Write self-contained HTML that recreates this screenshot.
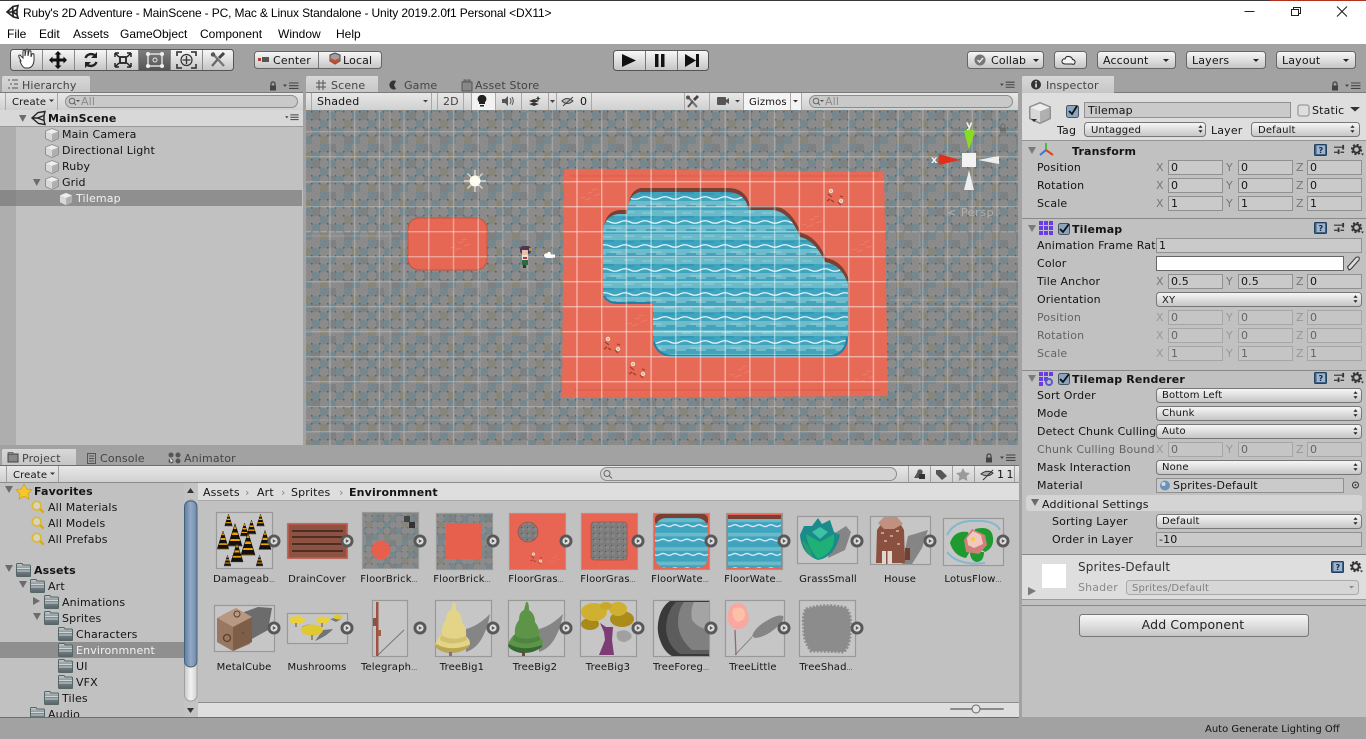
<!DOCTYPE html>
<html><head><meta charset="utf-8"><title>Unity</title>
<style>
html,body{margin:0;padding:0;background:#a2a2a2;overflow:hidden}
svg{display:block;position:absolute;left:0;top:0}
text{font-family:"DejaVu Sans","Liberation Sans",sans-serif;font-size:11px;letter-spacing:.15px;fill:#141414;white-space:pre}
.w{font-family:"Liberation Sans",sans-serif;font-size:12px;letter-spacing:0;fill:#000}
.b{font-weight:bold}
.g{fill:#777}
.tb{fill:#444}
.c{text-anchor:middle}
.s{font-size:10px}
.f{fill:#cacaca;stroke:#909090}
.d{fill:url(#btn);stroke:#777}
.el{font-size:6px;letter-spacing:0}
</style></head>
<body>
<svg width="1366" height="739" viewBox="0 0 1366 739" xmlns="http://www.w3.org/2000/svg">
<defs>
<linearGradient id="btn" x1="0" y1="0" x2="0" y2="1"><stop offset="0" stop-color="#f8f8f8"/><stop offset="1" stop-color="#c4c4c4"/></linearGradient>
<linearGradient id="bar" x1="0" y1="0" x2="0" y2="1"><stop offset="0" stop-color="#e8e8e8"/><stop offset="1" stop-color="#d0d0d0"/></linearGradient>
<linearGradient id="act" x1="0" y1="0" x2="0" y2="1"><stop offset="0" stop-color="#7d7d7d"/><stop offset="1" stop-color="#555"/></linearGradient>
<linearGradient id="tab" x1="0" y1="0" x2="0" y2="1"><stop offset="0" stop-color="#d8d8d8"/><stop offset="1" stop-color="#c6c6c6"/></linearGradient>
<linearGradient id="sb" x1="0" y1="0" x2="1" y2="0"><stop offset="0" stop-color="#5f7da0"/><stop offset=".5" stop-color="#94aac4"/><stop offset="1" stop-color="#6b88a8"/></linearGradient>
<linearGradient id="sbt" x1="0" y1="0" x2="1" y2="0"><stop offset="0" stop-color="#c8c8c8"/><stop offset=".5" stop-color="#f2f2f2"/><stop offset="1" stop-color="#d0d0d0"/></linearGradient>
<linearGradient id="fo" x1="0" y1="0" x2="0" y2="1"><stop offset="0" stop-color="#c8cfd2"/><stop offset=".45" stop-color="#7f8b90"/><stop offset="1" stop-color="#55626a"/></linearGradient>

<pattern id="tiles" patternUnits="userSpaceOnUse" width="48" height="48">
<rect width="48" height="48" fill="#8b8b8b"/>
<g fill="#76878d">
<rect x="8" y="0" width="8" height="8"/><rect x="32" y="0" width="8" height="8"/>
<rect x="0" y="8" width="8" height="8"/><rect x="24" y="8" width="8" height="8"/>
<rect x="16" y="16" width="8" height="8"/><rect x="40" y="16" width="8" height="8"/>
<rect x="32" y="24" width="8" height="8"/>
<rect x="0" y="32" width="8" height="8"/><rect x="24" y="32" width="8" height="8"/>
<rect x="16" y="40" width="8" height="8"/>
</g>
<g fill="#88857a"><rect x="16" y="8" width="8" height="8"/><rect x="8" y="24" width="8" height="8"/><rect x="32" y="40" width="8" height="8"/></g>
<g fill="#7e8182"><rect x="24" y="16" width="8" height="8"/><rect x="8" y="40" width="8" height="8"/><rect x="40" y="32" width="8" height="8"/><rect x="40" y="0" width="8" height="8"/></g>
<g fill="#5c5c5c">
<rect x="7" y="7" width="1.500" height="1.500"/><rect x="15" y="7" width="1.500" height="1.500"/><rect x="23" y="7" width="1.500" height="1.500"/><rect x="31" y="7" width="1.500" height="1.500"/><rect x="39" y="7" width="1.500" height="1.500"/><rect x="47" y="7" width="1" height="1.500"/>
<rect x="7" y="15" width="1.500" height="1.500"/><rect x="15" y="15" width="1.500" height="1.500"/><rect x="23" y="15" width="1.500" height="1.500"/><rect x="31" y="15" width="1.500" height="1.500"/><rect x="39" y="15" width="1.500" height="1.500"/><rect x="47" y="15" width="1" height="1.500"/>
<rect x="7" y="23" width="1.500" height="1.500"/><rect x="15" y="23" width="1.500" height="1.500"/><rect x="23" y="23" width="1.500" height="1.500"/><rect x="31" y="23" width="1.500" height="1.500"/><rect x="39" y="23" width="1.500" height="1.500"/><rect x="47" y="23" width="1" height="1.500"/>
<rect x="7" y="31" width="1.500" height="1.500"/><rect x="15" y="31" width="1.500" height="1.500"/><rect x="23" y="31" width="1.500" height="1.500"/><rect x="31" y="31" width="1.500" height="1.500"/><rect x="39" y="31" width="1.500" height="1.500"/><rect x="47" y="31" width="1" height="1.500"/>
<rect x="7" y="39" width="1.500" height="1.500"/><rect x="15" y="39" width="1.500" height="1.500"/><rect x="23" y="39" width="1.500" height="1.500"/><rect x="31" y="39" width="1.500" height="1.500"/><rect x="39" y="39" width="1.500" height="1.500"/><rect x="47" y="39" width="1" height="1.500"/>
</g>
</pattern>
<pattern id="tilesS" patternUnits="userSpaceOnUse" width="48" height="48" patternTransform="scale(.75)"><rect width="48" height="48" fill="url(#tiles)"/></pattern>
<pattern id="grayT" patternUnits="userSpaceOnUse" width="6" height="6"><rect width="6" height="6" fill="#7c7c7c"/><rect x="0" y="0" width="3" height="3" fill="#868686"/><rect x="5" y="5" width="1" height="1" fill="#555"/></pattern>
<pattern id="grid" patternUnits="userSpaceOnUse" x="601" y="181" width="24.7" height="25">
<rect width="24.7" height="1.400" fill="#fff" fill-opacity=".38"/><rect width="1.400" height="25" fill="#fff" fill-opacity=".38"/>
</pattern>
<pattern id="water" patternUnits="userSpaceOnUse" x="0" y="210" width="40" height="24">
<rect width="40" height="24" fill="#3fa5bf"/>
<rect y="0" width="40" height="6" fill="#6abaca"/><rect y="15" width="40" height="6" fill="#6ebccb"/>
<path d="M0 7h14M22 8h12M6 20h10M26 20h10" stroke="#2a94b5" stroke-width="1.300"/>
<path d="M2 3h10M24 2h10M10 18h12" stroke="#94cfd9" stroke-width="1"/>
<path d="M0 12q5-2.500 10 0t10 0t10 0t10 0" stroke="#e2f5f8" stroke-width="1.300" fill="none"/>
</pattern>
<pattern id="waterS" patternUnits="userSpaceOnUse" width="40" height="24" patternTransform="scale(.6)">
<rect width="40" height="24" fill="#3fa5bf"/><rect width="40" height="6" fill="#6abaca"/><path d="M0 12q5-3 10 0t10 0t10 0t10 0" stroke="#eef" stroke-width="2" fill="none"/></pattern>

<symbol id="cube" viewBox="0 0 14 14" overflow="visible">
<path d="M7 0.500L13.500 3.200V10.500L7 13.500L.5 10.500V3.200Z" fill="#cfcfcf" stroke="#909090"/>
<path d="M7 1L13 3.400L7 6L1 3.400Z" fill="#eee"/><path d="M7 6V13L13 10.200V3.600Z" fill="#b0b0b0"/><path d="M7 6V13L1 10.200V3.600Z" fill="#d8d8d8"/>
</symbol>
<symbol id="folder" viewBox="0 0 15 14" overflow="visible">
<path d="M.5 3.500V1.500Q.5.5 1.500.5H6L7 2H13.500Q14.500 2 14.500 3V13Q14.500 13.500 13.500 13.500H1.500Q.5 13.500.5 12.500Z" fill="url(#fo)" stroke="#566"/>
<path d="M1 5.500H14M1 8H14" stroke="#e6e9ea" stroke-width=".8"/>
</symbol>
<symbol id="lens" viewBox="0 0 16 16" overflow="visible">
<circle cx="6.500" cy="6.500" r="5" fill="#e8e8c8" fill-opacity=".5" stroke="#e0b820" stroke-width="1.800"/><path d="M10.500 10.500L14.500 14.500" stroke="#d8a818" stroke-width="2.600"/>
</symbol>
<symbol id="play" viewBox="0 0 14 14"><circle cx="7" cy="7" r="6.500" fill="#585858"/><circle cx="7" cy="7" r="3.600" fill="#ddd"/><path d="M5.800 5V9L9 7Z" fill="#585858"/></symbol>
<symbol id="book" viewBox="0 0 13 12"><rect x=".5" y=".5" width="12" height="11" rx="1" fill="#3f6288" stroke="#24405e"/><rect x="2.500" y="1.500" width="8.500" height="8.500" fill="#9cb6ce"/><text x="4.500" y="9" style="font-size:8px;fill:#224;font-weight:bold;letter-spacing:0">?</text></symbol>
<symbol id="slid" viewBox="0 0 12 12"><path d="M0 3.500H9M0 9H4M7 9H11" stroke="#333" stroke-width="1.300"/><rect x="9" y="1" width="2" height="5" fill="#333"/><rect x="4" y="6" width="2" height="5" fill="#333"/></symbol>
<symbol id="gear" viewBox="0 0 13 12"><circle cx="5.500" cy="5.500" r="3.300" fill="none" stroke="#333" stroke-width="2"/><circle cx="5.500" cy="5.500" r="4.800" fill="none" stroke="#333" stroke-width="1.800" stroke-dasharray="2 1.770"/><path d="M10 9.500H13L11.500 11.500Z" fill="#333"/></symbol>
<symbol id="ud" viewBox="0 0 6 9"><path d="M3 0L5.500 3H.5ZM3 9L5.500 6H.5Z" fill="#222"/></symbol>
<symbol id="menu" viewBox="0 0 17 8"><path d="M0 2.500L4 2.500L2 5Z" fill="#444"/><path d="M6 1H15.500M6 3.700H15.500M6 6.400H15.500" stroke="#444" stroke-width="1.100"/></symbol>
<symbol id="lock" viewBox="0 0 8 10"><path d="M2 4.500V3Q2 1 4 1T6 3V4.500" fill="none" stroke="#444" stroke-width="1.200"/><rect x="1" y="4.500" width="6" height="5" fill="#444"/></symbol>
<symbol id="flow" viewBox="0 0 20 20" overflow="visible">
<path d="M2 6l4 3M5 12l3 2M12 14l3 3M1 13l3-2M14 8l3 1" stroke="#a84030" stroke-width="1.400"/><circle cx="5" cy="3" r="2.200" fill="#e4e0d8"/><circle cx="15" cy="13" r="2.200" fill="#e4e0d8"/><circle cx="5" cy="3" r=".9" fill="#e0a030"/><circle cx="15" cy="13" r=".9" fill="#e0a030"/>
</symbol>
<symbol id="gr" viewBox="0 0 24 14" overflow="visible"><path d="M2 10l5-1M7 12l6-2M10 5l5-1M16 8l6-2M14 2l5-1" stroke="#f08a78" stroke-width="1" opacity=".55"/></symbol>
<symbol id="cone" viewBox="0 0 14 22" overflow="visible">
<path d="M7 0L14 22H0Z" fill="#f0a000" stroke="#111" stroke-width=".6"/><path d="M5 5H9L10 8.500H4ZM3.200 11H10.800L11.800 15H2ZM1.200 17H12.800L13.800 21.500H.4Z" fill="#111"/>
</symbol>
</defs>

<!-- base -->
<rect width="1366" height="739" fill="#a2a2a2"/>
<rect width="1366" height="44" fill="#fff"/>
<rect width="1366" height="1" fill="#3a3a3a"/>
<rect x="1270" width="96" height="1" fill="#b03020"/>
<g fill="none" stroke="#222" stroke-width="1.600"><path d="M7 12L13 6.500L18 5.500L17 9.500V14.500L18 18L13.500 17L7 12Z"/><path d="M7 12H12.500L17 9.500M12.500 12L17 14.500M13 7L12.500 12L13.500 17"/></g>
<text class="w" x="23" y="17" style="letter-spacing:-.147px">Ruby's 2D Adventure - MainScene - PC, Mac &amp; Linux Standalone - Unity 2019.2.0f1 Personal &lt;DX11&gt;</text>
<path d="M1244.500 11.500H1254.500" stroke="#222"/>
<path d="M1291.500 9.500H1298.500V15.500H1291.500ZM1293.500 9.500V7.500H1300.500V13.500H1298.500" fill="none" stroke="#222"/>
<path d="M1337 6.500L1347 16.500M1347 6.500L1337 16.500" stroke="#222" stroke-width="1.100"/>
<text class="w" x="7" y="38">File</text><text class="w" x="39" y="38">Edit</text><text class="w" x="73" y="38">Assets</text><text class="w" x="120" y="38">GameObject</text><text class="w" x="200" y="38">Component</text><text class="w" x="278" y="38">Window</text><text class="w" x="336" y="38">Help</text>

<!-- tool group -->
<rect x="10.500" y="49.500" width="223" height="21" rx="3" fill="url(#btn)" stroke="#555"/>
<rect x="139" y="50" width="32" height="20" fill="url(#act)"/>
<path d="M42.500 50V70M74.500 50V70M106.500 50V70M138.500 50V70M170.500 50V70M202.500 50V70" stroke="#8a8a8a"/>
<path d="M21 61l-2-4q-1-2 1-2l3 3v-7q1-2 2 0v5l1-6q1-2 2 0v6l1-5q2-1 2 1v5l1-3q2-1 2 1v6q-1 6-5 7h-4q-3-1-5-7z" fill="#fff" stroke="#333"/>
<path d="M58 51l3.500 3.500h-2v4h4v-2l3.500 3.500-3.500 3.500v-2h-4v4h2L58 69l-3.500-3.500h2v-4h-4v2L49 60l3.500-3.500v2h4v-4h-2z" fill="#111"/>
<path d="M85.500 58a6 6 0 0 1 10-2M96.500 62a6 6 0 0 1-10 2" fill="none" stroke="#222" stroke-width="2.400"/><path d="M97 52v6h-6zM85 68v-6h6z" fill="#222"/>
<rect x="120" y="57" width="6" height="6" fill="none" stroke="#222" stroke-width="1.800"/><path d="M115 53h4M115 53v4M131 53h-4M131 53v4M115 67h4M115 67v-4M131 67h-4M131 67v-4M116 54l3 3M130 54l-3 3M116 66l3-3M130 66l-3-3" stroke="#222" stroke-width="1.500"/>
<rect x="148" y="54" width="14" height="12" fill="none" stroke="#e8e8e8" stroke-width="1.400"/><circle cx="155" cy="60" r="2" fill="none" stroke="#e8e8e8"/><g fill="#f0f0f0"><circle cx="148" cy="54" r="2"/><circle cx="162" cy="54" r="2"/><circle cx="148" cy="66" r="2"/><circle cx="162" cy="66" r="2"/></g>
<circle cx="186.500" cy="60" r="5.500" fill="none" stroke="#333" stroke-width="1.200"/><path d="M186.500 56v8M182.500 60h8" stroke="#333" stroke-width="1.300"/><path d="M177 56v-4h5M196 56v-4h-5M177 64v4h5M196 64v4h-5" fill="none" stroke="#444" stroke-width="1.800"/>
<path d="M213 54l11 12" stroke="#777" stroke-width="2.400"/><path d="M224 53l-5 5" stroke="#444" stroke-width="3"/><path d="M218 59l-6 7" stroke="#666" stroke-width="2.200"/><circle cx="213" cy="54.500" r="2.200" fill="#555"/>

<!-- center local -->
<rect x="254.500" y="51.500" width="127" height="17" rx="3" fill="url(#btn)" stroke="#666"/><path d="M318.500 52V68" stroke="#777"/>
<rect x="262" y="57" width="7" height="5" fill="#555"/><rect x="258" y="58" width="3" height="3" fill="#b04030"/>
<text x="273" y="64">Center</text>
<path d="M330 55l5-2 5 2v6l-5 3-5-3z" fill="#a0a0a0" stroke="#444"/><path d="M330 58l5 2 5-2v3l-5 3-5-3z" fill="#c05030"/>
<text x="343" y="64">Local</text>

<!-- play -->
<rect x="613.500" y="50.500" width="95" height="20" rx="3" fill="url(#btn)" stroke="#555"/><path d="M645.500 51V70M677.500 51V70" stroke="#777"/>
<path d="M622 54V67L636 60.500Z" fill="#111"/>
<rect x="655" y="54" width="3.500" height="13" fill="#111"/><rect x="661" y="54" width="3.500" height="13" fill="#111"/>
<path d="M685 54V67L696 60.500ZM696 54h3v13h-3z" fill="#111"/>

<!-- right tool -->
<rect x="967.500" y="51.500" width="76" height="17" rx="3" fill="url(#btn)" stroke="#666"/>
<circle cx="980" cy="60" r="5.500" fill="#777"/><path d="M977.500 60l2 2 3.500-4" fill="none" stroke="#eee" stroke-width="1.400"/>
<text x="991" y="64">Collab</text><path d="M1033 59h6l-3 3z" fill="#222"/>
<rect x="1054.500" y="51.500" width="32" height="17" rx="3" fill="url(#btn)" stroke="#666"/>
<path d="M1065 64q-3.500-.5-3-3t3-2q1-3 4-2.500t3.500 3q3 .5 2.500 3t-3 1.500z" fill="#f4f4f4" stroke="#222"/>
<rect x="1097.500" y="51.500" width="78" height="17" rx="3" fill="url(#btn)" stroke="#666"/><text x="1103" y="64">Account</text><path d="M1163 59h6l-3 3z" fill="#222"/>
<rect x="1186.500" y="51.500" width="79" height="17" rx="3" fill="url(#btn)" stroke="#666"/><text x="1192" y="64">Layers</text><path d="M1253 59h6l-3 3z" fill="#222"/>
<rect x="1276.500" y="51.500" width="79" height="17" rx="3" fill="url(#btn)" stroke="#666"/><text x="1282" y="64">Layout</text><path d="M1343 59h6l-3 3z" fill="#222"/>

<!-- Hierarchy panel -->
<path d="M2 93V78Q2 76 4 76H88Q90 76 90 78V93Z" fill="url(#tab)"/>
<path d="M8 81h2M12 81h6M10 85h2M14 85h4M8 89h2M12 89h6" stroke="#555" stroke-width="1.100" transform="translate(0 -1)"/>
<text class="tb" x="22" y="89">Hierarchy</text>
<use href="#lock" x="269" y="81" width="8" height="10"/><use href="#menu" x="283" y="82" width="17" height="8"/>
<rect x="0" y="92" width="303" height="1" fill="#7a7a7a"/>
<rect x="0" y="93" width="303" height="17" fill="url(#bar)"/>
<path d="M5.500 93V110M57.500 93V110" stroke="#a8a8a8"/>
<text class="s" x="12" y="105">Create</text><path d="M49 99.500h5l-2.500 2.500z" fill="#333"/>
<rect x="65.500" y="95.500" width="232" height="12" rx="6" fill="#c9c9c9" stroke="#8c8c8c"/>
<circle cx="72" cy="101" r="2.800" fill="none" stroke="#666"/><path d="M74 103l2 2" stroke="#666"/><path d="M76 100h4l-2 2z" fill="#555"/>
<text x="81" y="105" style="fill:#8a8a8a">All</text>
<rect y="110" width="303" height="335" fill="#c1c1c1"/>
<rect y="126" width="16" height="319" fill="#aeaeae"/>
<rect y="110" width="303" height="16" fill="#d8d8d8"/><rect y="126" width="303" height="1" fill="#9a9a9a"/>
<path d="M19 115h7.500l-3.750 7z" fill="#6c6c6c"/>
<g fill="none" stroke="#222" stroke-width="1.400"><path d="M32 118L38 112.500L45 111.500L44 115.500V120.500L45 124.500L38.500 123.500Z"/><path d="M32 118H37.500L44 115.500M37.500 118L44 120.500"/></g>
<text class="b" x="48" y="122">MainScene</text><use href="#menu" x="285" y="114" width="15" height="7"/>
<use href="#cube" x="45" y="128" width="14" height="14"/><text x="62" y="138">Main Camera</text>
<use href="#cube" x="45" y="144" width="14" height="14"/><text x="62" y="154">Directional Light</text>
<use href="#cube" x="45" y="160" width="14" height="14"/><text x="62" y="170">Ruby</text>
<path d="M33 179h7.500l-3.750 7z" fill="#6c6c6c"/><use href="#cube" x="45" y="176" width="14" height="14"/><text x="62" y="186">Grid</text>
<rect y="190" width="302" height="16" fill="#8f8f8f"/><rect y="190" width="16" height="16" fill="#888"/>
<use href="#cube" x="59" y="192" width="14" height="14"/><text x="76" y="202" style="fill:#f2f2f2">Tilemap</text>
<rect x="303" y="76" width="3" height="369" fill="#a2a2a2"/>

<!-- Scene tabs -->
<path d="M306 93V78Q306 76 308 76H378V93Z" fill="url(#tab)"/>
<path d="M319 80v10M323 80v10M316 83h10M316 87h10" stroke="#555"/><text class="tb" x="331" y="89">Scene</text>
<path d="M396 81a4.500 4.500 0 1 0 0 8l-2-4z" fill="#333"/><text class="tb" x="404" y="89">Game</text>
<rect x="462" y="82" width="10" height="9" fill="#888" stroke="#555"/><path d="M464 82v-2h2v2M468 82v-2h2v2" stroke="#555" fill="none"/><text class="tb" x="475" y="89">Asset Store</text>
<use href="#menu" x="1000" y="81" width="16" height="8"/>
<rect x="306" y="92" width="712" height="1" fill="#7a7a7a"/>
<rect x="306" y="93" width="712" height="17" fill="url(#bar)"/>
<path d="M311.500 93V110M431.500 93V110M437.500 93V110M463.500 93V110M471.500 93V110M495.500 93V110M521.500 93V110M548.500 93V110M556.500 93V110M591.500 93V110M684.500 93V110M709.500 93V110M743.500 93V110M801.500 93V110" stroke="#a8a8a8"/>
<text x="317" y="105">Shaded</text><path d="M423 100h5l-2.500 2.500z" fill="#444"/>
<text x="443" y="105" style="fill:#444">2D</text>
<rect x="472" y="93" width="23" height="17" fill="#f2f2f2"/>
<path d="M482 95a4 4 0 0 1 3 7v2h-6v-2a4 4 0 0 1 3-7zM480 105h4v1.500h-4z" fill="#222"/>
<path d="M502 99h3l3-3v10l-3-3h-3z" fill="#555"/><path d="M510 98q2 3 0 6M512 97q2.500 4 0 8" fill="none" stroke="#555"/>
<path d="M529 101l5-2 5 2-5 2zM529 104l5 2 5-2-5-1.500z" fill="#333"/><path d="M538 96l1 2 2 .5-2 .5-1 2-1-2-2-.5 2-.5z" fill="#333"/>
<path d="M550 100h5l-2.500 3z" fill="#444"/>
<path d="M562 101q5-5 11 0q-6 5-11 0z" fill="#bbb" stroke="#444"/><path d="M563 106l10-9" stroke="#444"/><text x="580" y="105">0</text>
<path d="M688 97l9 10" stroke="#777" stroke-width="2.200"/><path d="M698 96l-4 4" stroke="#444" stroke-width="2.800"/><path d="M693 101l-5 6" stroke="#555" stroke-width="2"/><circle cx="688" cy="97.500" r="2" fill="#555"/>
<rect x="717" y="97" width="9" height="8" rx="1" fill="#555"/><path d="M726 100l3-2v6l-3-2z" fill="#555"/><path d="M735 100h5l-2.500 2.500z" fill="#444"/>
<rect x="744" y="93" width="57" height="17" fill="#f4f4f4"/><path d="M790.500 93V110" stroke="#aaa"/>
<text x="749" y="105" style="font-size:10px">Gizmos</text><path d="M793 100h5l-2.500 2.500z" fill="#333"/>
<rect x="809.500" y="95.500" width="203" height="12" rx="6" fill="#c9c9c9" stroke="#8c8c8c"/>
<circle cx="816" cy="101" r="2.800" fill="none" stroke="#666"/><path d="M818 103l2 2" stroke="#666"/><path d="M820 100h4l-2 2z" fill="#555"/>
<text x="825" y="105" style="fill:#8a8a8a">All</text>

<!-- Scene view -->
<svg x="306" y="110" width="712" height="335" viewBox="306 110 712 335">
<rect x="306" y="110" width="712" height="335" fill="url(#tiles)"/>
<path d="M564 169L884 172L888 396L562 398Z" fill="#e76a56"/>
<path d="M574 390H880M570 176H878" stroke="#d95a48" stroke-width="1"/>
<rect x="408" y="218" width="79" height="52" rx="11" fill="#e66854" stroke="#c9503f"/>
<use href="#gr" x="448" y="238" width="24" height="14"/>
<use href="#gr" x="578" y="188" width="24" height="14"/><use href="#gr" x="800" y="215" width="24" height="14"/><use href="#gr" x="850" y="240" width="24" height="14"/><use href="#gr" x="625" y="314" width="24" height="14"/><use href="#gr" x="728" y="365" width="24" height="14"/><use href="#gr" x="852" y="370" width="24" height="14"/>
<use href="#flow" x="603" y="336" width="20" height="20"/><use href="#flow" x="628" y="361" width="20" height="20"/><use href="#flow" x="826" y="188" width="20" height="20"/>
<path d="M603 232Q604 216 618 214H627Q628 194 640 192H727Q745 192 749 210H773Q790 212 800 237Q815 240 825 262Q842 265 848 284V338Q846 354 832 357H672Q656 355 653 340V304H617Q603 302 603 290Z" fill="#7a4034" transform="translate(1 -4)"/>
<path d="M603 232Q604 216 618 214H627Q628 194 640 192H727Q745 192 749 210H773Q790 212 800 237Q815 240 825 262Q842 265 848 284V338Q846 354 832 357H672Q656 355 653 340V304H617Q603 302 603 290Z" fill="url(#water)"/>
<path d="M604 296Q608 303 617 303H652M654 342Q657 355 672 356H832Q846 353 847 338" fill="none" stroke="#2280a8" stroke-width="2"/>
<rect x="306" y="110" width="712" height="335" fill="url(#grid)" opacity=".6"/>
<path d="M564 169L884 172L888 396L562 398Z" fill="url(#grid)" opacity=".8"/>
<rect x="408" y="218" width="79" height="52" rx="11" fill="url(#grid)" opacity=".55"/>
<path d="M306 236H400M306 330H560M306 420H1018M890 300H1018M390 110V445M920 110V445M480 270V445M980 110V445" stroke="#fff" stroke-opacity=".14" stroke-width="1.200"/>
<!-- sun -->
<g stroke="#e8e2d0" stroke-width="1.500" opacity=".85"><path d="M464 181H486M475 170V192M467.500 173.500L482.500 188.500M482.500 173.500L467.500 188.500"/></g><circle cx="475" cy="181" r="5.500" fill="#fffdf0"/>
<!-- ruby -->
<g><rect x="520" y="246" width="11" height="8" rx="3" fill="#4a3658"/><rect x="522" y="250" width="6" height="5" fill="#e8c0a8"/><rect x="529" y="248" width="3" height="3" fill="#c09030"/><rect x="522" y="255" width="6" height="5" fill="#e8e0d8"/><rect x="523" y="257" width="4" height="2" fill="#b03838"/><rect x="522" y="260" width="6" height="5" fill="#2e6a44"/><rect x="523" y="265" width="3" height="3" fill="#20402c"/></g>
<path d="M544 256q0-3 3-2.500 1-2 3-1.500 1 1.500 1 2.500l4 0 0 3-4 .5-4 0q-2 0-3-2z" fill="#fff"/>
<!-- gizmo -->
<rect x="962" y="153" width="14" height="14" fill="#f2f2f2"/>
<path d="M960 160L939 154Q938 160 939 165Z" fill="#e0301a"/>
<path d="M969 150L964 131Q969 128 975 131Z" fill="#88dd22"/>
<path d="M978 160L999 156V164Z" fill="#eee"/>
<path d="M969 170L964 190H974Z" fill="#eee"/>
<text x="966" y="128" class="b s" style="fill:#f4f4f4">y</text><text x="931" y="163" class="b s" style="fill:#f4f4f4">x</text>
<use href="#lock" x="999" y="123" width="8" height="10" opacity=".35"/>
<text x="947" y="216" style="fill:#b0b0b0;letter-spacing:.6px">&lt; Persp</text>
</svg>

<!-- Project panel -->
<rect y="445" width="1019" height="272" fill="#a2a2a2"/>
<path d="M2 465V451Q2 449 4 449H76V465Z" fill="url(#tab)"/>
<rect x="8" y="454" width="10" height="8" fill="#888" stroke="#444"/><rect x="8" y="452.500" width="5" height="2" fill="#888" stroke="#444" stroke-width=".6"/>
<text class="tb" x="22" y="462">Project</text>
<rect x="87.500" y="453.500" width="8" height="10" fill="none" stroke="#555"/><path d="M89 456h5M89 458.500h5M89 461h5" stroke="#555"/><text class="tb" x="100" y="462">Console</text>
<g fill="#555"><circle cx="171" cy="455" r="2.500"/><circle cx="178" cy="455" r="2.500"/><circle cx="171" cy="461" r="2.500"/><circle cx="178" cy="461" r="2.500"/></g><path d="M170 458l3 3-2 1v2z" fill="#fff"/><text class="tb" x="184" y="462">Animator</text>
<use href="#lock" x="985" y="453" width="8" height="10"/><use href="#menu" x="1000" y="454" width="17" height="8"/>
<rect y="465" width="1019" height="1" fill="#6e6e6e"/>
<rect y="466" width="1019" height="16" fill="url(#bar)"/><rect y="482" width="1019" height="1" fill="#8c8c8c"/>
<path d="M6.500 466V482M58.500 466V482M908.500 466V482M930.500 466V482M952.500 466V482M974.500 466V482M1014.500 466V482" stroke="#a0a0a0"/>
<text class="s" x="13" y="478">Create</text><path d="M50 472.500h5l-2.500 2.500z" fill="#333"/>
<rect x="600.500" y="467.500" width="296" height="13" rx="6.500" fill="#d4d4d4" stroke="#8c8c8c"/>
<circle cx="607" cy="473.500" r="3" fill="none" stroke="#666"/><path d="M609 475.500l3 3" stroke="#666"/>
<path d="M914 478l3.500-6 3.500 6z" fill="#555"/><circle cx="920" cy="472" r="2.700" fill="#555"/><rect x="919" y="474" width="6" height="5" fill="#333"/>
<path d="M936 470h5l6 6-5 4-6-6z" fill="#555"/>
<path d="M963 468l2.200 4.400 4.800.6-3.500 3.400.9 4.600-4.400-2.300-4.400 2.300.9-4.600-3.500-3.400 4.800-.6z" fill="#9a9a9a"/>
<path d="M981 474q6-5 12-1q-5 5-12 1z" fill="#aaa" stroke="#333"/><path d="M983 480l10-10" stroke="#333"/><text x="997" y="478" style="letter-spacing:2.500px">11</text>

<!-- tree -->
<rect y="483" width="184" height="234" fill="#c1c1c1"/>
<path d="M5 486h8l-4 7z" fill="#6c6c6c"/><path d="M24 484l2.500 5 5.500.7-4 3.900 1 5.400-5-2.600-5 2.600 1-5.400-4-3.900 5.500-.7z" fill="#f8c82a" stroke="#d09a18" stroke-width=".7"/>
<text class="b" x="34" y="495">Favorites</text>
<use href="#lens" x="31" y="500" width="14" height="14"/><text x="48" y="511">All Materials</text>
<use href="#lens" x="31" y="516" width="14" height="14"/><text x="48" y="527">All Models</text>
<use href="#lens" x="31" y="532" width="14" height="14"/><text x="48" y="543">All Prefabs</text>
<path d="M5 565h8l-4 7z" fill="#6c6c6c"/><use href="#folder" x="16" y="563" width="15" height="14"/><text class="b" x="34" y="574">Assets</text>
<path d="M19 581h8l-4 7z" fill="#6c6c6c"/><use href="#folder" x="30" y="579" width="15" height="14"/><text x="48" y="590">Art</text>
<path d="M33 597l7 4-7 4z" fill="#6c6c6c"/><use href="#folder" x="44" y="595" width="15" height="14"/><text x="62" y="606">Animations</text>
<path d="M33 613h8l-4 7z" fill="#6c6c6c"/><use href="#folder" x="44" y="611" width="15" height="14"/><text x="62" y="622">Sprites</text>
<use href="#folder" x="58" y="627" width="15" height="14"/><text x="76" y="638">Characters</text>
<rect y="642" width="184" height="16" fill="#8f8f8f"/><use href="#folder" x="58" y="643" width="15" height="14"/><text x="76" y="654" style="fill:#f2f2f2">Environmnent</text>
<use href="#folder" x="58" y="659" width="15" height="14"/><text x="76" y="670">UI</text>
<use href="#folder" x="58" y="675" width="15" height="14"/><text x="76" y="686">VFX</text>
<use href="#folder" x="44" y="691" width="15" height="14"/><text x="62" y="702">Tiles</text>
<svg x="0" y="700" width="184" height="17" viewBox="0 700 184 17"><use href="#folder" x="30" y="707" width="15" height="14"/><text x="48" y="718">Audio</text></svg>

<!-- scrollbar -->
<rect x="184" y="483" width="14" height="234" fill="#c4c4c4"/>
<path d="M187 493l3.500-5 3.500 5z" fill="#333"/><path d="M187 708l3.500 5 3.500-5z" fill="#333"/>
<rect x="184.500" y="500" width="12.500" height="201" rx="6" fill="url(#sbt)" stroke="#a0a0a0"/>
<rect x="184.500" y="501" width="12.500" height="166" rx="6" fill="url(#sb)" stroke="#44607f"/>
<rect x="198" y="483" width="821" height="17" fill="#dedede"/><rect x="198" y="500" width="821" height="1" fill="#a8a8a8"/>
<text x="203" y="496">Assets</text><text x="245" y="496" style="fill:#888">&#8250;</text><text x="257" y="496">Art</text><text x="281" y="496" style="fill:#888">&#8250;</text><text x="291" y="496">Sprites</text><text x="339" y="496" style="fill:#888">&#8250;</text><text class="b" x="349" y="496">Environmnent</text>
<rect x="198" y="501" width="821" height="201" fill="#c1c1c1"/>
<rect x="198" y="702" width="821" height="15" fill="#dedede"/>
<rect x="198" y="702" width="821" height="1" fill="#8c8c8c"/>
<rect y="717" width="1019" height="1" fill="#6e6e6e"/>
<rect x="950" y="708" width="54" height="2" rx="1" fill="#8a8a8a"/><circle cx="976" cy="709" r="4" fill="#e4e4e4" stroke="#666"/>

<!-- thumbs frames -->
<g fill="#c6c6c6" stroke="#999" stroke-width="1.200">
<rect x="216.500" y="512.500" width="56" height="56"/>
<rect x="287.500" y="523.500" width="60" height="35"/>
<rect x="362.500" y="512.500" width="56" height="56"/>
<rect x="436.500" y="513.500" width="56" height="56"/>
<rect x="509.500" y="513.500" width="56" height="56"/>
<rect x="581.500" y="513.500" width="56" height="56"/>
<rect x="653.500" y="513.500" width="56" height="56"/>
<rect x="726.500" y="513.500" width="56" height="56"/>
<rect x="797.500" y="516.500" width="60" height="47"/>
<rect x="870.500" y="516.500" width="60" height="48"/>
<rect x="943.500" y="518.500" width="60" height="47"/>
<rect x="214.500" y="605.500" width="60" height="46"/>
<rect x="287.500" y="613.500" width="60" height="30"/>
<rect x="372.500" y="600.500" width="35" height="56"/>
<rect x="435.500" y="600.500" width="56" height="56"/>
<rect x="508.500" y="600.500" width="56" height="56"/>
<rect x="580.500" y="600.500" width="56" height="56"/>
<rect x="653.500" y="600.500" width="56" height="56"/>
<rect x="725.500" y="600.500" width="59" height="56"/>
<rect x="799.500" y="600.500" width="56" height="56"/>
</g>
<!-- Damageable -->
<use href="#cone" x="224" y="514" width="9" height="12"/><use href="#cone" x="256" y="514" width="9" height="12"/><use href="#cone" x="228" y="523" width="14" height="24"/><use href="#cone" x="240" y="523" width="9" height="13"/><use href="#cone" x="247" y="520" width="9" height="14"/><use href="#cone" x="217" y="531" width="12" height="18"/><use href="#cone" x="241" y="533" width="14" height="22"/><use href="#cone" x="259" y="530" width="12" height="20"/><use href="#cone" x="231" y="543" width="12" height="19"/><use href="#cone" x="223" y="555" width="9" height="11"/><use href="#cone" x="255" y="555" width="9" height="11"/>
<!-- Drain -->
<rect x="288" y="524" width="59" height="34" fill="#8d5242" stroke="#c85a4a" stroke-width="1.500"/><path d="M292 531H343M292 537H343M292 544H343M292 551H343" stroke="#3a211a" stroke-width="1.500"/>
<!-- Brick1 -->
<rect x="363" y="513" width="55" height="55" fill="url(#tilesS)"/><rect x="404" y="516" width="6" height="6" fill="#444"/><rect x="409" y="522" width="6" height="6" fill="#333"/><circle cx="381" cy="550" r="9.500" fill="#e7604e"/>
<!-- Brick2 -->
<rect x="437" y="514" width="55" height="55" fill="url(#tilesS)"/><rect x="446" y="523" width="36" height="36" rx="1" fill="#e7604e"/>
<!-- Grass1 -->
<rect x="510" y="514" width="55" height="55" fill="#e76552"/><circle cx="528" cy="532" r="10" fill="url(#grayT)" stroke="#a85040" stroke-width=".8"/><use href="#flow" x="530" y="552" width="14" height="14"/><use href="#gr" x="546" y="555" width="15" height="9"/>
<!-- Grass2 -->
<rect x="582" y="514" width="55" height="55" fill="#e76552"/><rect x="591" y="522" width="36" height="38" rx="3" fill="url(#grayT)" stroke="#a85040" stroke-width=".8"/>
<!-- Water1 -->
<rect x="654" y="514" width="55" height="55" fill="#e76552"/><rect x="655" y="514" width="53" height="12" rx="5" fill="#7a4034"/><rect x="655" y="518" width="53" height="50" rx="11" fill="url(#waterS)"/>
<!-- Water2 -->
<rect x="727" y="514" width="55" height="55" fill="#e76552"/><rect x="728" y="515" width="53" height="6" fill="#7a4034"/><rect x="728" y="519" width="53" height="49" fill="url(#waterS)"/>
<!-- GrassSmall -->
<path d="M832 535L846 526L851 532L845 550L828 558Z" fill="#858585"/>
<path d="M800 535Q801 554 818 560Q835 557 840 535L834 532L830 520L822 524L818 518L812 526L804 526Z" fill="#1a8a8a"/>
<path d="M802 540Q810 545 813 558Q805 552 802 540Z" fill="#2a9e70"/><path d="M806 534L820 542L834 534Q836 552 818 559Q808 548 806 534Z" fill="#1fb078"/><path d="M812 532L820 527L828 532L820 539Z" fill="#3cc2a4"/>
<!-- House -->
<path d="M908 536L928 530L922 548L912 564H902Z" fill="#858585"/>
<path d="M877 530L884 520H898L904 530L905 563H876Z" fill="#8a5040"/><path d="M878 523L884 517H897L903 524L894 529H884Z" fill="#c09080"/><rect x="882" y="551" width="10" height="13" fill="#e0d8d0"/><rect x="886" y="551" width="1.500" height="13" fill="#8a5040"/><rect x="905" y="548" width="5" height="12" fill="#704030"/>
<path d="M881 533h3M890 536h3M896 531h3M884 541h3M897 544h3" stroke="#c89a88" stroke-width="2"/>
<!-- Lotus -->
<path d="M947 535Q955 520 975 521Q995 520 1000 530M947 552Q958 566 985 563" fill="none" stroke="#84b8cc" stroke-width="2"/>
<path d="M950 543Q954 530 968 532L972 548L966 558Q954 556 950 543Z" fill="#1e9a30"/><path d="M975 529Q992 525 993 538Q994 548 985 552L975 545Z" fill="#1e9a30"/><path d="M970 552Q978 552 984 552Q984 562 976 562Q970 560 970 552Z" fill="#1e9a30"/>
<path d="M964 540L972 529L985 535L987 545L979 554L966 552Z" fill="#cf8078"/><path d="M967 538L973 531L981 535L983 544L974 548L968 545Z" fill="#f0c8c0"/><circle cx="973" cy="539" r="2" fill="#f0d030"/>
<!-- MetalCube -->
<path d="M244 612L258 607L272 608L268 630L250 640Z" fill="#6c6c6c"/>
<path d="M217 618L236 608L252 617L250 644L233 651L217 642Z" fill="#a08068"/><path d="M217 618L236 608L252 617L233 627Z" fill="#b89880"/><path d="M233 627V651L252 642L252 617Z" fill="#7e5e48"/><path d="M217 618V642L233 651V627Z" fill="#987860"/><circle cx="227" cy="638" r="3.500" fill="none" stroke="#5a4030" stroke-width="1.300"/><circle cx="237" cy="614" r="3" fill="none" stroke="#5a4030"/><circle cx="243" cy="633" r="1.200" fill="#4a6040"/>
<!-- Mushrooms -->
<path d="M302 627q8-5 15 0l-6 4zM315 641q12-5 18-12l-10 1zM330 619q8-2 11 0l-5 3z" fill="#6f7478"/>
<ellipse cx="297" cy="620" rx="8" ry="4" fill="#e8d040"/><ellipse cx="312" cy="630" rx="11" ry="5.500" fill="#e0c830"/><ellipse cx="323" cy="620" rx="7" ry="3.500" fill="#e8d040"/><ellipse cx="338" cy="617" rx="4.500" ry="2.500" fill="#e0c830"/><path d="M296 623v4M312 635v5M322 623v4" stroke="#887030" stroke-width="1.400"/>
<!-- Telegraph -->
<rect x="376" y="602" width="2.500" height="54" fill="#a05040"/><rect x="373" y="618" width="4" height="8" fill="#905040"/><rect x="378" y="630" width="3" height="6" fill="#a06040"/><path d="M378 655L404 630" stroke="#777" stroke-width="1"/>
<!-- Tree1 -->
<path d="M466 629Q478 626 490 614Q488 626 484 634Q478 648 466 652Z" fill="#858585"/>
<path d="M453 602Q456 601 456 610Q462 614 462 622Q467 628 466 636Q472 642 469 646Q460 653 448 652Q438 651 435 645Q437 638 442 634Q441 626 446 620Q446 612 451 610Z" fill="#e4d488"/>
<path d="M436 644Q450 652 469 645L469 647Q460 654 448 653Q438 651 435 646Z" fill="#b8a650"/><path d="M441 635Q452 642 466 636L467 640Q452 647 440 640Z" fill="#d2c070"/><rect x="449" y="652" width="3" height="4" fill="#8a6a88"/>
<!-- Tree2 -->
<path d="M539 629Q551 626 563 614Q561 626 557 634Q551 648 539 652Z" fill="#858585"/>
<path d="M526 602Q529 601 529 610Q535 614 535 622Q540 628 539 636Q545 642 542 646Q533 653 521 652Q511 651 508 645Q510 638 515 634Q514 626 519 620Q519 612 524 610Z" fill="#5e9448"/>
<path d="M509 644Q523 652 542 645L542 647Q533 654 521 653Q511 651 508 646Z" fill="#356a32"/><path d="M514 635Q525 642 539 636L540 640Q525 647 513 640Z" fill="#4e8440"/><rect x="522" y="652" width="3" height="4" fill="#6a4a38"/>
<!-- Tree3 -->
<path d="M617 632q8-4 13 1t-5 9q-10 0-8-10z" fill="#a0a0a0"/>
<path d="M600 623L606 627L613 627L612 640L614 655H599L605 640L604 632Z" fill="#7c3c74"/>
<ellipse cx="590" cy="624" rx="9" ry="6" fill="#a88a18"/><ellipse cx="594" cy="612" rx="13" ry="9" fill="#d0b030"/><ellipse cx="622" cy="619" rx="12" ry="8" fill="#ab8c1a"/><ellipse cx="618" cy="609" rx="9" ry="7" fill="#d0b030"/><ellipse cx="606" cy="606" rx="6" ry="4" fill="#c8a828"/>
<!-- Foreg -->
<path d="M670 601H709V656H672Q664 652 660 640Q656 630 659 618Q662 606 670 601Z" fill="#3a3a3a"/>
<path d="M676 602H709V654H680Q668 646 666 630Q666 612 676 602Z" fill="#5c5c5c"/>
<path d="M684 602H709V650H692Q678 638 678 622Q678 610 684 602Z" fill="#808080"/>
<path d="M694 602H709V630Q698 628 692 620Q690 610 694 602Z" fill="#a4a4a4"/>
<!-- Little -->
<path d="M752 636Q755 627 768 620Q778 614 783 616Q785 620 777 627Q766 637 755 638Z" fill="#858585"/><path d="M735 655L752 637" stroke="#888"/>
<path d="M736 603Q745 602 747 611Q751 619 746 626Q738 632 732 627Q726 622 728 614Q729 605 736 603Z" fill="#f8a8a0"/><path d="M733 609Q742 605 745 612Q746 620 738 622Q731 618 733 609Z" fill="#fcc0a8"/><path d="M735 630L736 655" stroke="#8a6a80" stroke-width="1.300"/>
<!-- Shad -->
<path d="M806 609Q825 603 846 608Q852 615 850 628Q851 644 844 652Q825 651 811 651Q803 640 804 628Q802 615 806 609Z" fill="#8c8c8c" stroke="#8c8c8c" stroke-width="3" stroke-dasharray="2 1.500"/>
<!-- play icons -->
<use href="#play" x="267" y="534" width="14" height="14"/><use href="#play" x="340" y="534" width="14" height="14"/><use href="#play" x="413" y="534" width="14" height="14"/><use href="#play" x="486" y="534" width="14" height="14"/><use href="#play" x="559" y="534" width="14" height="14"/><use href="#play" x="631" y="534" width="14" height="14"/><use href="#play" x="704" y="534" width="14" height="14"/><use href="#play" x="777" y="534" width="14" height="14"/><use href="#play" x="850" y="534" width="14" height="14"/><use href="#play" x="923" y="534" width="14" height="14"/><use href="#play" x="996" y="534" width="14" height="14"/>
<use href="#play" x="267" y="621" width="14" height="14"/><use href="#play" x="340" y="621" width="14" height="14"/><use href="#play" x="413" y="621" width="14" height="14"/><use href="#play" x="486" y="621" width="14" height="14"/><use href="#play" x="559" y="621" width="14" height="14"/><use href="#play" x="631" y="621" width="14" height="14"/><use href="#play" x="704" y="621" width="14" height="14"/><use href="#play" x="777" y="621" width="14" height="14"/><use href="#play" x="850" y="621" width="14" height="14"/>
<!-- labels -->
<g>
<text class="c s" x="244" y="582">Damageab<tspan class="el">&#8230;</tspan></text><text class="c s" x="317" y="582">DrainCover</text><text class="c s" x="389" y="582">FloorBrick<tspan class="el">&#8230;</tspan></text><text class="c s" x="462" y="582">FloorBrick<tspan class="el">&#8230;</tspan></text><text class="c s" x="536" y="582">FloorGras<tspan class="el">&#8230;</tspan></text><text class="c s" x="608" y="582">FloorGras<tspan class="el">&#8230;</tspan></text><text class="c s" x="680" y="582">FloorWate<tspan class="el">&#8230;</tspan></text><text class="c s" x="753" y="582">FloorWate<tspan class="el">&#8230;</tspan></text><text class="c s" x="828" y="582">GrassSmall</text><text class="c s" x="900" y="582">House</text><text class="c s" x="973" y="582">LotusFlow<tspan class="el">&#8230;</tspan></text>
<text class="c s" x="244" y="670">MetalCube</text><text class="c s" x="317" y="670">Mushrooms</text><text class="c s" x="389" y="670">Telegraph<tspan class="el">&#8230;</tspan></text><text class="c s" x="462" y="670">TreeBig1</text><text class="c s" x="535" y="670">TreeBig2</text><text class="c s" x="608" y="670">TreeBig3</text><text class="c s" x="681" y="670">TreeForeg<tspan class="el">&#8230;</tspan></text><text class="c s" x="753" y="670">TreeLittle</text><text class="c s" x="826" y="670">TreeShad<tspan class="el">&#8230;</tspan></text>
</g>

<!-- Inspector -->
<rect x="1022" y="93" width="344" height="624" fill="#c1c1c1"/>
<rect x="1019" y="76" width="3" height="641" fill="#a2a2a2"/>
<rect x="1022" y="92" width="344" height="1" fill="#7a7a7a"/>
<path d="M1022 93V78Q1022 76 1024 76H1114V93Z" fill="url(#tab)"/>
<circle cx="1036" cy="84.500" r="5" fill="#333"/><rect x="1035.300" y="83.500" width="1.500" height="4" fill="#eee"/><rect x="1035.300" y="81" width="1.500" height="1.500" fill="#eee"/>
<text class="tb" x="1046" y="89">Inspector</text>
<use href="#lock" x="1331" y="81" width="8" height="10"/><use href="#menu" x="1345" y="82" width="17" height="8"/>
<rect x="1022" y="93" width="344" height="47" fill="#dedede"/>
<use href="#cube" x="1029" y="102" width="22" height="22"/><path d="M1031 119h6l-3 3z" fill="#333"/>
<rect x="1066.500" y="105.500" width="12" height="12" rx="2" fill="#8ba4c0" stroke="#456"/><path d="M1069 111l3 3 5-8" fill="none" stroke="#111" stroke-width="1.800"/>
<rect x="1084.500" y="102.500" width="206" height="15" class="f"/><text x="1088" y="114">Tilemap</text>
<rect x="1298" y="105" width="11" height="11" rx="2" fill="#dedede" stroke="#8a8a8a"/><text x="1312" y="114">Static</text><path d="M1350 107h10l-5 4.500z" fill="#333"/>
<text x="1057" y="134">Tag</text><rect x="1084.500" y="122.500" width="121" height="14" rx="3" class="d"/><text class="s" x="1091" y="133">Untagged</text><use href="#ud" x="1198" y="125" width="5" height="8"/>
<text x="1211" y="134">Layer</text><rect x="1251.500" y="122.500" width="108" height="14" rx="3" class="d"/><text class="s" x="1258" y="133">Default</text><use href="#ud" x="1350" y="125" width="5" height="8"/>
<rect x="1022" y="140" width="344" height="1" fill="#959595"/>
<path d="M1028 147h8l-4 7z" fill="#7a7a7a"/>
<path d="M1046 143V150" stroke="#44bb44" stroke-width="2"/><path d="M1046 150L1040 155" stroke="#3377dd" stroke-width="2"/><path d="M1046 150L1053 155" stroke="#dd4422" stroke-width="2"/>
<text class="b" x="1072" y="155">Transform</text>
<use href="#book" x="1314" y="144" width="13" height="12"/><use href="#slid" x="1334" y="144" width="11" height="11"/><use href="#gear" x="1351" y="144" width="13" height="12"/>
<text x="1037" y="171">Position</text><text x="1037" y="189">Rotation</text><text x="1037" y="207">Scale</text>
<g>
<text class="g" x="1156" y="171">X</text><rect x="1168.500" y="160.500" width="54" height="14" class="f"/><text x="1171" y="171">0</text>
<text class="g" x="1226" y="171">Y</text><rect x="1238.500" y="160.500" width="54" height="14" class="f"/><text x="1241" y="171">0</text>
<text class="g" x="1296" y="171">Z</text><rect x="1307.500" y="160.500" width="54" height="14" class="f"/><text x="1310" y="171">0</text>
<text class="g" x="1156" y="189">X</text><rect x="1168.500" y="178.500" width="54" height="14" class="f"/><text x="1171" y="189">0</text>
<text class="g" x="1226" y="189">Y</text><rect x="1238.500" y="178.500" width="54" height="14" class="f"/><text x="1241" y="189">0</text>
<text class="g" x="1296" y="189">Z</text><rect x="1307.500" y="178.500" width="54" height="14" class="f"/><text x="1310" y="189">0</text>
<text class="g" x="1156" y="207">X</text><rect x="1168.500" y="196.500" width="54" height="14" class="f"/><text x="1171" y="207">1</text>
<text class="g" x="1226" y="207">Y</text><rect x="1238.500" y="196.500" width="54" height="14" class="f"/><text x="1241" y="207">1</text>
<text class="g" x="1296" y="207">Z</text><rect x="1307.500" y="196.500" width="54" height="14" class="f"/><text x="1310" y="207">1</text>
</g>
<rect x="1022" y="218" width="344" height="1" fill="#8a8a8a"/>
<!-- Tilemap -->
<path d="M1028 225h8l-4 7z" fill="#7a7a7a"/>
<g fill="#6a3ce8"><rect x="1039" y="221" width="4" height="4"/><rect x="1044" y="221" width="4" height="4"/><rect x="1049" y="221" width="4" height="4"/><rect x="1039" y="226" width="4" height="4"/><rect x="1044" y="226" width="4" height="4"/><rect x="1049" y="226" width="4" height="4"/><rect x="1039" y="231" width="4" height="4"/><rect x="1044" y="231" width="4" height="4"/><rect x="1049" y="231" width="4" height="4"/></g>
<rect x="1058.500" y="223.500" width="11" height="11" rx="2" fill="#8ba4c0" stroke="#456"/><path d="M1060 229l3 3 6-8" fill="none" stroke="#111" stroke-width="1.800"/>
<text class="b" x="1072" y="233">Tilemap</text>
<use href="#book" x="1314" y="222" width="13" height="12"/><use href="#slid" x="1334" y="222" width="11" height="11"/><use href="#gear" x="1351" y="222" width="13" height="12"/>
<text x="1037" y="249">Animation Frame Rat</text><rect x="1156.500" y="238.500" width="205" height="14" class="f"/><text x="1159" y="249">1</text>
<text x="1037" y="267">Color</text><rect x="1156.500" y="256.500" width="187" height="14" fill="#fff" stroke="#666"/>
<path d="M1349 270l2-1 8-9q1-3-1-3t-2.500 1l-8 9z" fill="#ddd" stroke="#333"/>
<text x="1037" y="285">Tile Anchor</text>
<text class="g" x="1156" y="285">X</text><rect x="1168.500" y="274.500" width="54" height="14" class="f"/><text x="1171" y="285">0.5</text>
<text class="g" x="1226" y="285">Y</text><rect x="1238.500" y="274.500" width="54" height="14" class="f"/><text x="1241" y="285">0.5</text>
<text class="g" x="1296" y="285">Z</text><rect x="1307.500" y="274.500" width="54" height="14" class="f"/><text x="1310" y="285">0</text>
<text x="1037" y="303">Orientation</text><rect x="1156.500" y="292.500" width="205" height="14" rx="3" class="d"/><text class="s" x="1162" y="303">XY</text><use href="#ud" x="1353" y="295" width="5" height="8"/>
<g opacity=".55">
<text x="1037" y="321">Position</text><text x="1037" y="339">Rotation</text><text x="1037" y="357">Scale</text>
<text class="g" x="1156" y="321">X</text><rect x="1168.500" y="310.500" width="54" height="14" class="f"/><text x="1171" y="321">0</text>
<text class="g" x="1226" y="321">Y</text><rect x="1238.500" y="310.500" width="54" height="14" class="f"/><text x="1241" y="321">0</text>
<text class="g" x="1296" y="321">Z</text><rect x="1307.500" y="310.500" width="54" height="14" class="f"/><text x="1310" y="321">0</text>
<text class="g" x="1156" y="339">X</text><rect x="1168.500" y="328.500" width="54" height="14" class="f"/><text x="1171" y="339">0</text>
<text class="g" x="1226" y="339">Y</text><rect x="1238.500" y="328.500" width="54" height="14" class="f"/><text x="1241" y="339">0</text>
<text class="g" x="1296" y="339">Z</text><rect x="1307.500" y="328.500" width="54" height="14" class="f"/><text x="1310" y="339">0</text>
<text class="g" x="1156" y="357">X</text><rect x="1168.500" y="346.500" width="54" height="14" class="f"/><text x="1171" y="357">1</text>
<text class="g" x="1226" y="357">Y</text><rect x="1238.500" y="346.500" width="54" height="14" class="f"/><text x="1241" y="357">1</text>
<text class="g" x="1296" y="357">Z</text><rect x="1307.500" y="346.500" width="54" height="14" class="f"/><text x="1310" y="357">1</text>
</g>
<rect x="1022" y="370" width="344" height="1" fill="#8a8a8a"/>
<!-- Renderer -->
<path d="M1028 375h8l-4 7z" fill="#7a7a7a"/>
<g fill="#6a3ce8"><rect x="1039" y="372" width="4" height="4"/><rect x="1044" y="372" width="4" height="4"/><rect x="1049" y="372" width="4" height="4"/><rect x="1039" y="377" width="4" height="4"/><rect x="1044" y="377" width="4" height="4"/><rect x="1039" y="382" width="4" height="4"/></g>
<circle cx="1049" cy="382" r="3" fill="none" stroke="#5a5ad0" stroke-width="2"/>
<rect x="1058.500" y="373.500" width="11" height="11" rx="2" fill="#8ba4c0" stroke="#456"/><path d="M1060 379l3 3 6-8" fill="none" stroke="#111" stroke-width="1.800"/>
<text class="b" x="1072" y="383">Tilemap Renderer</text>
<use href="#book" x="1314" y="372" width="13" height="12"/><use href="#slid" x="1334" y="372" width="11" height="11"/><use href="#gear" x="1351" y="372" width="13" height="12"/>
<text x="1037" y="399">Sort Order</text><rect x="1156.500" y="388.500" width="205" height="14" rx="3" class="d"/><text class="s" x="1162" y="398">Bottom Left</text><use href="#ud" x="1353" y="391" width="5" height="8"/>
<text x="1037" y="417">Mode</text><rect x="1156.500" y="406.500" width="205" height="14" rx="3" class="d"/><text class="s" x="1162" y="416">Chunk</text><use href="#ud" x="1353" y="409" width="5" height="8"/>
<text x="1037" y="435">Detect Chunk Culling</text><rect x="1156.500" y="424.500" width="205" height="14" rx="3" class="d"/><text class="s" x="1162" y="434">Auto</text><use href="#ud" x="1353" y="427" width="5" height="8"/>
<g opacity=".55"><text x="1037" y="453">Chunk Culling Bound</text>
<text class="g" x="1156" y="453">X</text><rect x="1168.500" y="442.500" width="54" height="14" class="f"/><text x="1171" y="453">0</text>
<text class="g" x="1226" y="453">Y</text><rect x="1238.500" y="442.500" width="54" height="14" class="f"/><text x="1241" y="453">0</text>
<text class="g" x="1296" y="453">Z</text><rect x="1307.500" y="442.500" width="54" height="14" class="f"/><text x="1310" y="453">0</text></g>
<text x="1037" y="471">Mask Interaction</text><rect x="1156.500" y="460.500" width="205" height="14" rx="3" class="d"/><text class="s" x="1162" y="470">None</text><use href="#ud" x="1353" y="463" width="5" height="8"/>
<text x="1037" y="489">Material</text><rect x="1156.500" y="478.500" width="187" height="14" class="f"/><circle cx="1165" cy="485.500" r="5" fill="#6b93b8"/><circle cx="1163.500" cy="484" r="2" fill="#c8dceb"/><text x="1173" y="489">Sprites-Default</text>
<circle cx="1355.500" cy="485" r="3" fill="none" stroke="#333"/><circle cx="1355.500" cy="485" r=".9" fill="#333"/>
<rect x="1026" y="495" width="336" height="16" rx="3" fill="#d4d4d4"/><path d="M1031 499h8l-4 7z" fill="#6a6a6a"/><text x="1042" y="508">Additional Settings</text>
<text x="1052" y="525">Sorting Layer</text><rect x="1156.500" y="514.500" width="205" height="14" rx="3" class="d"/><text class="s" x="1162" y="524">Default</text><use href="#ud" x="1353" y="517" width="5" height="8"/>
<text x="1052" y="543">Order in Layer</text><rect x="1156.500" y="532.500" width="205" height="14" class="f"/><text x="1159" y="543">-10</text>
<!-- Material -->
<rect x="1022" y="554" width="344" height="1" fill="#8a8a8a"/>
<rect x="1022" y="555" width="344" height="44" fill="#dedede"/>
<rect x="1022" y="599" width="344" height="1" fill="#9c9c9c"/><rect x="1022" y="605" width="344" height="1" fill="#8a8a8a"/>
<rect x="1042" y="564" width="24" height="24" fill="#fff"/>
<path d="M1028 587l8 4-8 4.500z" fill="#7a7a7a"/>
<text x="1078" y="571" style="font-size:12px;fill:#333">Sprites-Default</text>
<use href="#book" x="1331" y="561" width="13" height="12"/><use href="#gear" x="1350" y="561" width="13" height="12"/>
<text x="1078" y="591" style="fill:#8a8a8a">Shader</text>
<rect x="1126.500" y="580.500" width="232" height="14" rx="3" fill="#d6d6d6" stroke="#aaa"/><text class="s" x="1132" y="591" style="fill:#808080">Sprites/Default</text><path d="M1349 586h5l-2.500 2.500z" fill="#888"/>
<rect x="1079.500" y="614.500" width="229" height="22" rx="3" class="d" stroke="#555"/><text class="c" x="1193" y="629" style="font-size:12.500px;fill:#222">Add Component</text>
<!-- status -->
<text x="1205" y="732" style="fill:#111;font-size:10px;letter-spacing:0">Auto Generate Lighting Off</text>
</svg>
</body></html>
